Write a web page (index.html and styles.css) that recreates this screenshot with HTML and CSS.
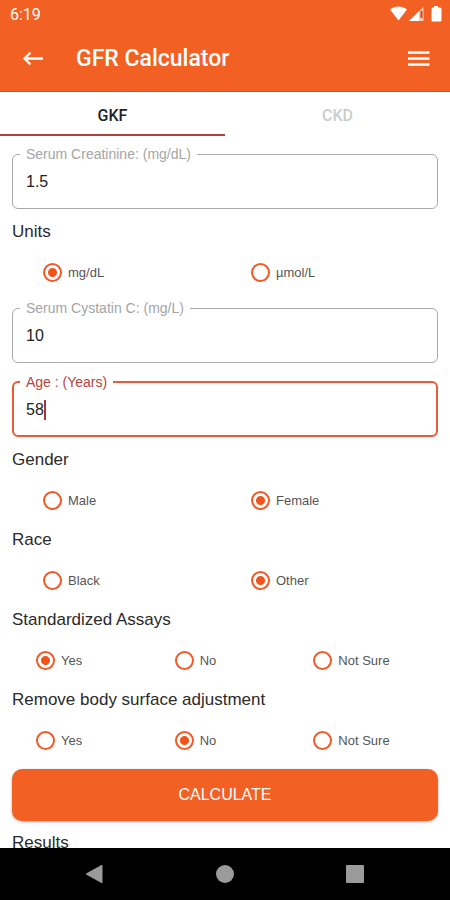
FILE: index.html
```html
<!DOCTYPE html>
<html lang="en">
<head>
<meta charset="utf-8">
<meta name="viewport" content="width=device-width, initial-scale=1">
<title>GFR Calculator</title>
<link rel="stylesheet" href="styles.css">
</head>
<body>
<div class="screen">
  <header class="header">
    <div class="status">
      <span>6:19</span>
      <svg class="status-icons" width="52" height="16" viewBox="0 0 52 16" aria-hidden="true">
        <path fill="#fff" d="M0 3.600C5-.5 12-.5 17 3.600L8.500 14.500z"/>
        <path fill="#fbc9b2" d="M19 15L33.500 1V15z"/>
        <path fill="#fff" d="M19 15L29 5.300V15z"/>
        <path fill="#d8421c" d="M30.500 5H32.500V12H30.500z"/>
        <path fill="#fff" d="M44 0h4v1.500h2q1.500 0 1.500 1.500v11q0 1.500-1.500 1.500h-7q-1.500 0-1.500-1.500v-11q0-1.500 1.500-1.500h1z"/>
      </svg>
    </div>
    <div class="appbar">
      <button class="icon-button" type="button" aria-label="Back">
        <svg width="22" height="16" viewBox="0 0 22 16"><path fill="none" stroke="#fff" stroke-width="2.400" d="M21 8.500H2.500M8.500 2.500L2.500 8.500L8.500 14.500"/></svg>
      </button>
      <h1 class="title">GFR Calculator</h1>
      <button class="icon-button" type="button" aria-label="Menu">
        <svg width="22" height="16" viewBox="0 0 22 16"><path fill="none" stroke="#fff" stroke-width="2.600" d="M0 2.500H21.500M0 8.500H21.500M0 14.500H21.500"/></svg>
      </button>
    </div>
  </header>

  <nav class="tabs">
    <button class="tab tab-active" type="button">GKF</button>
    <button class="tab" type="button">CKD</button>
  </nav>

  <main class="content">
    <fieldset class="field">
      <legend><label for="creatinine">Serum Creatinine: (mg/dL)</label></legend>
      <input id="creatinine" type="text" value="1.5">
    </fieldset>

    <h2 class="heading" id="units">Units</h2>
    <div class="options two" role="radiogroup" aria-labelledby="units">
      <label><input type="radio" name="units" checked>mg/dL</label>
      <label><input type="radio" name="units">µmol/L</label>
    </div>

    <fieldset class="field">
      <legend><label for="cystatin">Serum Cystatin C: (mg/L)</label></legend>
      <input id="cystatin" type="text" value="10">
    </fieldset>

    <fieldset class="field field-active">
      <legend><label for="age">Age : (Years)</label></legend>
      <div class="entry">
        <input id="age" type="text" value="58">
        <span class="caret"></span>
      </div>
    </fieldset>

    <h2 class="heading" id="gender">Gender</h2>
    <div class="options two" role="radiogroup" aria-labelledby="gender">
      <label><input type="radio" name="gender">Male</label>
      <label><input type="radio" name="gender" checked>Female</label>
    </div>

    <h2 class="heading" id="race">Race</h2>
    <div class="options two" role="radiogroup" aria-labelledby="race">
      <label><input type="radio" name="race">Black</label>
      <label><input type="radio" name="race" checked>Other</label>
    </div>

    <h2 class="heading" id="assays">Standardized Assays</h2>
    <div class="options three" role="radiogroup" aria-labelledby="assays">
      <label><input type="radio" name="assays" checked>Yes</label>
      <label><input type="radio" name="assays">No</label>
      <label><input type="radio" name="assays">Not Sure</label>
    </div>

    <h2 class="heading" id="surface">Remove body surface adjustment</h2>
    <div class="options three" role="radiogroup" aria-labelledby="surface">
      <label><input type="radio" name="surface">Yes</label>
      <label><input type="radio" name="surface" checked>No</label>
      <label><input type="radio" name="surface">Not Sure</label>
    </div>

    <button class="calculate" type="button">CALCULATE</button>
    <h2 class="heading">Results</h2>
  </main>

  <footer class="navbar">
    <button class="nav-button" type="button" aria-label="Back">
      <svg width="20" height="20" viewBox="0 0 20 20"><path fill="#9b9b9b" d="M1.500 9.300L16.500 1q1-.4 1 .8v16.400q0 1.200-1 .8L1.500 10.700q-1-.7 0-1.400z"/></svg>
    </button>
    <button class="nav-button" type="button" aria-label="Home">
      <svg width="20" height="20" viewBox="0 0 20 20"><circle cx="10" cy="10" r="9" fill="#9b9b9b"/></svg>
    </button>
    <button class="nav-button" type="button" aria-label="Recent apps">
      <svg width="20" height="20" viewBox="0 0 20 20"><rect x="1" y="1" width="18" height="18" rx="1" fill="#9b9b9b"/></svg>
    </button>
  </footer>
</div>
</body>
</html>
```

FILE: styles.css
```css
* {
  box-sizing: border-box;
}

body {
  margin: 0;
  background: #fff;
  color: #222;
  font-family: "Liberation Sans", Arial, sans-serif;
}

button,
input {
  margin: 0;
  border: 0;
  padding: 0;
  background: none;
  font-family: inherit;
}

svg {
  display: block;
}

.screen {
  display: flex;
  flex-direction: column;
  height: 100vh;
}

.header {
  flex: none;
  background: #f26024;
  border-bottom: 1px solid #e9500f;
  color: #fff;
  font-family: Roboto, sans-serif;
}

.status {
  display: flex;
  justify-content: space-between;
  align-items: center;
  height: 28px;
  padding: 0 8px 0 10px;
  font-size: 16px;
}

.appbar {
  display: flex;
  align-items: center;
  height: 63px;
  padding: 0 20px 3px 22px;
}

.title {
  flex: 1;
  margin: 0 0 0 32px;
  font-size: 23px;
  font-weight: 500;
}

.tabs {
  flex: none;
  display: flex;
  height: 44px;
}

.tab {
  flex: 1;
  border-bottom: 2px solid transparent;
  padding-top: 4px;
  color: #ccc;
  font-family: Roboto, sans-serif;
  font-size: 16px;
  font-weight: 500;
}

.tab-active {
  border-color: #b0423a;
  color: #222;
}

.content {
  flex: 1;
  min-height: 0;
  overflow: hidden;
  padding: 10px 12px 0;
}

.field {
  margin: 0 0 3px;
  border: 1px solid #aaa;
  border-radius: 6px;
  padding: 0 7px 6px;
}

.field legend {
  padding: 0 6px;
  color: #a5a5a5;
  font-size: 14px;
  line-height: 16px;
}

.field input {
  display: block;
  width: 100%;
  height: 40px;
  padding: 0 6px;
  color: #222;
  font-size: 16px;
  outline: 0;
}

.field-active {
  margin-top: 11px;
  border: 2px solid #ee5a35;
  padding: 0 6px 5px;
}

.field-active legend {
  color: #b5453f;
}

.entry {
  position: relative;
}

.caret {
  position: absolute;
  top: 10px;
  left: 24px;
  width: 2px;
  height: 20px;
  background: #a8352f;
}

.heading {
  margin: 0;
  color: #2a2a2a;
  font-size: 17px;
  font-weight: 400;
  line-height: 40px;
}

.options {
  display: grid;
  height: 40px;
  padding: 0 5px;
}

.options + .field {
  margin-top: 8px;
}

.two {
  grid-template-columns: repeat(2, 1fr);
  padding-left: 31px;
  margin-right: -26px;
}

.three {
  grid-template-columns: repeat(3, 1fr);
  padding-left: 24px;
  margin-right: -19px;
}

.options label {
  display: flex;
  align-items: center;
  gap: 6px;
  color: #555;
  font-size: 13px;
}

.options input {
  appearance: none;
  width: 19px;
  height: 19px;
  border: 2px solid #f05a28;
  border-radius: 50%;
}

.options input:checked {
  background: radial-gradient(circle, #f0541c 4px, transparent 5px);
}

.calculate {
  display: block;
  width: 100%;
  height: 52px;
  margin: 9px 0 2px;
  border-radius: 10px;
  background: #f26024;
  box-shadow: 0 1px 3px rgba(0, 0, 0, 0.3);
  color: #fff;
  font-size: 16px;
}

.navbar {
  flex: none;
  display: flex;
  justify-content: center;
  align-items: center;
  gap: 110px;
  height: 52px;
  background: #000;
}
```
